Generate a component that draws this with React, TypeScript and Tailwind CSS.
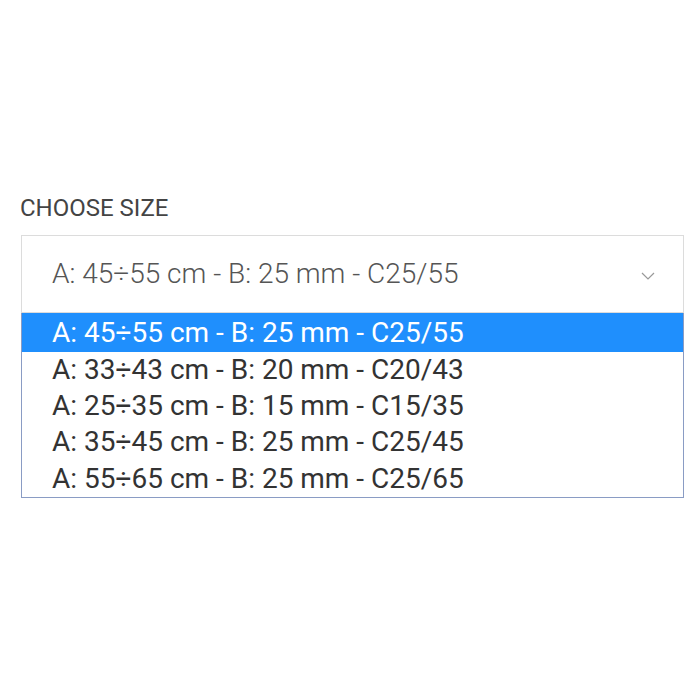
import React from "react";

const options = [
  "A: 45÷55 cm - B: 25 mm - C25/55",
  "A: 33÷43 cm - B: 20 mm - C20/43",
  "A: 25÷35 cm - B: 15 mm - C15/35",
  "A: 35÷45 cm - B: 25 mm - C25/45",
  "A: 55÷65 cm - B: 25 mm - C25/65",
];

export default function App() {
  return (
    <div className="w-[700px] h-[700px] bg-white pt-[195px] pl-[20px]" style={{ fontFamily: "Roboto, 'Liberation Sans', sans-serif" }}>
      <div className="text-[24px] leading-[26px] text-[#444]">CHOOSE SIZE</div>
      <div className="ml-[1px] mt-[14px] w-[663px]">
        <div className="h-[78px] border border-[#dcdcdc] flex items-center pl-[30px] pr-[28px] justify-between">
          <span className="text-[28px] font-light text-[#555]">{options[0]}</span>
          <svg width="14" height="8" viewBox="0 0 14 8" className="mt-[4px]">
            <path d="M1 1 L7 7 L13 1" fill="none" stroke="#999" strokeWidth="1.2" />
          </svg>
        </div>
        <div className="border border-[#8a9cc4] border-t-0">
          {options.map((o, i) => (
            <div
              key={o}
              className={`flex items-center pl-[30px] text-[28px] ${i === 0 ? "h-[38.5px] pt-[1px] bg-[#1f8ffd] text-white" : "h-[36.4px] text-[#333]"}`}
            >
              {o}
            </div>
          ))}
        </div>
      </div>
    </div>
  );
}
